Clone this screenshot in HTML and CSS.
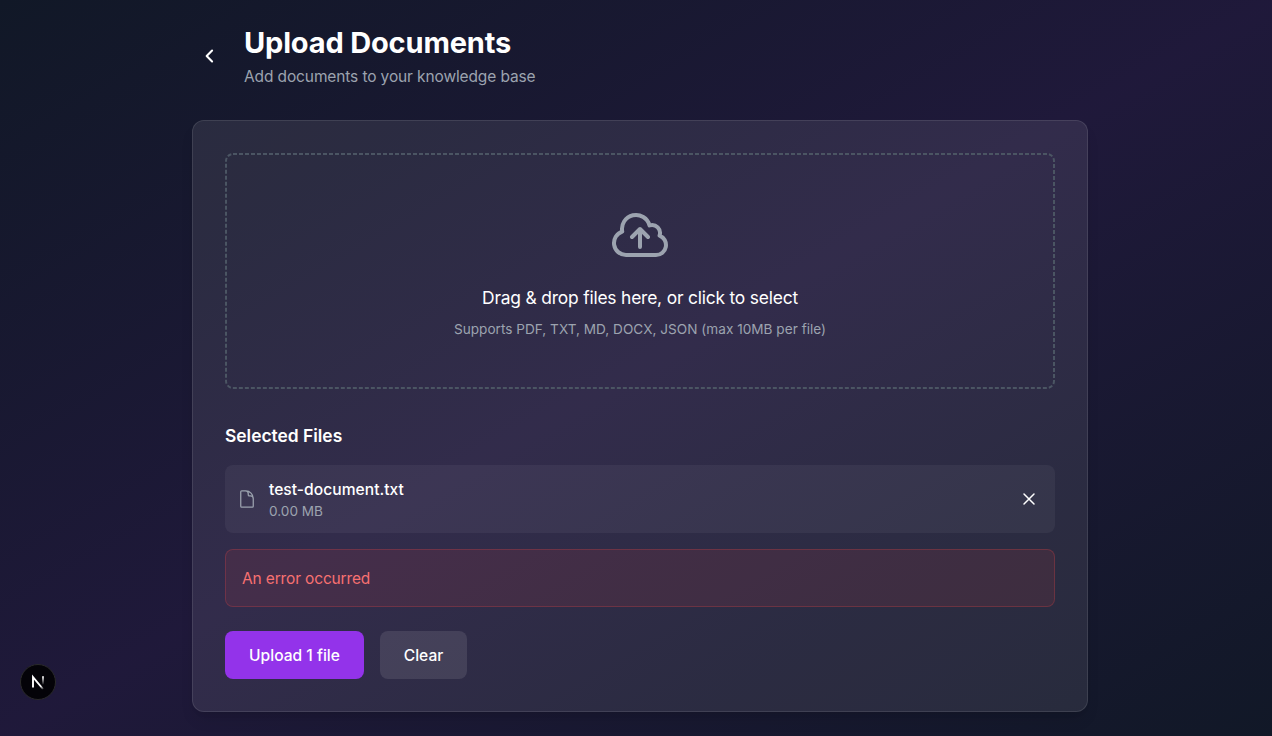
FILE: index.html
```html
<!DOCTYPE html>
<html lang="en">
<head>
<meta charset="utf-8">
<title>Upload Documents</title>
<link rel="stylesheet" href="styles.css">
</head>
<body>
<main class="page">
  <div class="container">
    <header class="header">
      <button class="icon-btn back" aria-label="Back">
        <svg class="icon" viewBox="0 0 24 24" stroke-width="2.5"><path d="M14.5 18.5 8 12l6.5-6.5"/></svg>
      </button>
      <div>
        <h1 class="title">Upload Documents</h1>
        <p class="subtitle">Add documents to your knowledge base</p>
      </div>
    </header>
    <section class="card">
      <div class="dropzone">
        <svg class="dropzone-outline" width="830" height="236"><rect x="1" y="1" width="828" height="234" rx="7"/></svg>
        <svg class="icon cloud" viewBox="0 0 24 24" stroke-width="1.5"><path d="M12 16.5V9.75m0 0 3 3m-3-3-3 3M6.75 19.5a4.5 4.5 0 0 1-1.41-8.775 5.25 5.25 0 0 1 10.233-2.33 3 3 0 0 1 3.758 3.848A3.752 3.752 0 0 1 18 19.5H6.75Z"/></svg>
        <p class="drop-text">Drag &amp; drop files here, or click to select</p>
        <p class="drop-hint">Supports PDF, TXT, MD, DOCX, JSON (max 10MB per file)</p>
      </div>
      <h2 class="section-title">Selected Files</h2>
      <div class="file">
        <svg class="icon file-icon" viewBox="0 0 24 24" stroke-width="1.5"><path d="M19.5 14.25v-2.625a3.375 3.375 0 0 0-3.375-3.375h-1.5A1.125 1.125 0 0 1 13.5 7.125v-1.5a3.375 3.375 0 0 0-3.375-3.375H8.25m2.25 0H5.625c-.621 0-1.125.504-1.125 1.125v17.25c0 .621.504 1.125 1.125 1.125h12.75c.621 0 1.125-.504 1.125-1.125V11.25a9 9 0 0 0-9-9Z"/></svg>
        <div class="file-info">
          <p class="file-name">test-document.txt</p>
          <p class="file-size">0.00 MB</p>
        </div>
        <button class="icon-btn remove" aria-label="Remove file">
          <svg class="icon" viewBox="0 0 24 24" stroke-width="1.8"><path d="M6 18 18 6M6 6l12 12"/></svg>
        </button>
      </div>
      <div class="error">An error occurred</div>
      <div class="actions">
        <button class="btn primary">Upload 1 file</button>
        <button class="btn secondary">Clear</button>
      </div>
    </section>
  </div>
  <div class="dev-badge">
    <svg class="dev-logo" viewBox="0 0 34 34" fill="none">
      <defs>
        <linearGradient id="diag" x1="18" y1="17" x2="23" y2="24" gradientUnits="userSpaceOnUse"><stop stop-color="#fff"/><stop offset=".5" stop-color="#fff"/><stop offset="1" stop-color="#fff" stop-opacity=".1"/></linearGradient>
        <linearGradient id="stem" x1="21" y1="11" x2="21" y2="20" gradientUnits="userSpaceOnUse"><stop stop-color="#fff"/><stop offset="1" stop-color="#fff" stop-opacity="0"/></linearGradient>
      </defs>
      <path d="M12 22.5V12.2L22 24" stroke="url(#diag)" stroke-width="1.9"/>
      <path d="M22 11.2V19.5" stroke="url(#stem)" stroke-width="1.9"/>
    </svg>
  </div>
</main>
</body>
</html>
```
FILE: styles.css
```css
* { box-sizing: border-box; margin: 0; padding: 0; }

body {
  overflow: hidden;
  background: #111827;
  color: #fff;
  font-family: Inter, "Liberation Sans", sans-serif;
  font-size: 16px;
  line-height: 24px;
}

.page {
  width: 1280px;
  min-height: 100vh;
  padding: 24px;
  background: linear-gradient(to bottom right, #111827, rgba(88, 28, 135, 0.2), #111827);
}

.container { width: 896px; margin: 0 auto; }

.header { display: flex; align-items: center; gap: 16px; margin-bottom: 32px; }

.icon {
  display: block;
  width: 20px;
  height: 20px;
  fill: none;
  stroke: currentColor;
  stroke-linecap: round;
  stroke-linejoin: round;
}

.icon-btn { border: 0; background: none; color: #fff; }
.back { padding: 8px; }
.remove { padding: 4px; }

.title { font-size: 29px; line-height: 37px; font-weight: 700; letter-spacing: -0.17px; }
.subtitle { margin-top: 4px; font-size: 15.5px; line-height: 23px; color: #9ca3af; letter-spacing: -0.12px; }

.card {
  padding: 32px;
  border: 1px solid rgba(255, 255, 255, 0.1);
  border-radius: 12px;
  background: rgba(255, 255, 255, 0.085);
  box-shadow: 0 10px 15px -3px rgba(0, 0, 0, 0.1), 0 4px 6px -4px rgba(0, 0, 0, 0.1);
}

.dropzone {
  position: relative;
  padding: 50px;
  border-radius: 8px;
  text-align: center;
}

.dropzone-outline {
  position: absolute;
  inset: 0;
  fill: none;
  stroke: #4b5563;
  stroke-width: 2;
  stroke-dasharray: 4 2;
}

.cloud { width: 64px; height: 64px; margin: 0 auto 16px; color: #9ca3af; }
.drop-text { padding-top: 1px; font-size: 17.4px; line-height: 28px; letter-spacing: -0.19px; }
.drop-hint { margin-top: 7px; font-size: 13.6px; line-height: 20px; letter-spacing: 0.02px; color: #9ca3af; }

.section-title {
  margin: 33px 0 15px;
  font-size: 17.4px;
  line-height: 28px;
  font-weight: 600;
}

.file {
  display: flex;
  align-items: center;
  gap: 12px;
  padding: 12px;
  border-radius: 8px;
  background: rgba(255, 255, 255, 0.05);
}

.file-icon { color: #9ca3af; }
.file-info { flex: 1; }
.file-name { padding-top: 1px; font-size: 15.6px; line-height: 23px; font-weight: 500; letter-spacing: 0.03px; }
.file-size { font-size: 13.6px; line-height: 20px; color: #9ca3af; }

.error {
  margin-top: 16px;
  padding: 17px 16px 15px;
  border: 1px solid rgba(239, 68, 68, 0.25);
  border-radius: 8px;
  background: rgba(239, 68, 68, 0.1);
  color: #f87171;
  font-size: 15.5px;
  letter-spacing: -0.15px;
}

.actions { display: flex; gap: 16px; margin-top: 24px; }

.btn {
  height: 48px;
  padding-top: 2px;
  border: 0;
  border-radius: 8px;
  color: #fff;
  font: 500 15.6px/24px Inter, "Liberation Sans", sans-serif;
}

.primary { width: 139px; background: #9333ea; }
.secondary { width: 87px; background: rgba(255, 255, 255, 0.1); }

.dev-badge {
  position: fixed;
  left: 20px;
  bottom: 36px;
  width: 36px;
  height: 36px;
  border-radius: 50%;
  background: rgba(0, 0, 0, 0.85);
  border: 1px solid #2a2a2a;
}

.dev-logo { display: block; width: 34px; height: 34px; }
```
